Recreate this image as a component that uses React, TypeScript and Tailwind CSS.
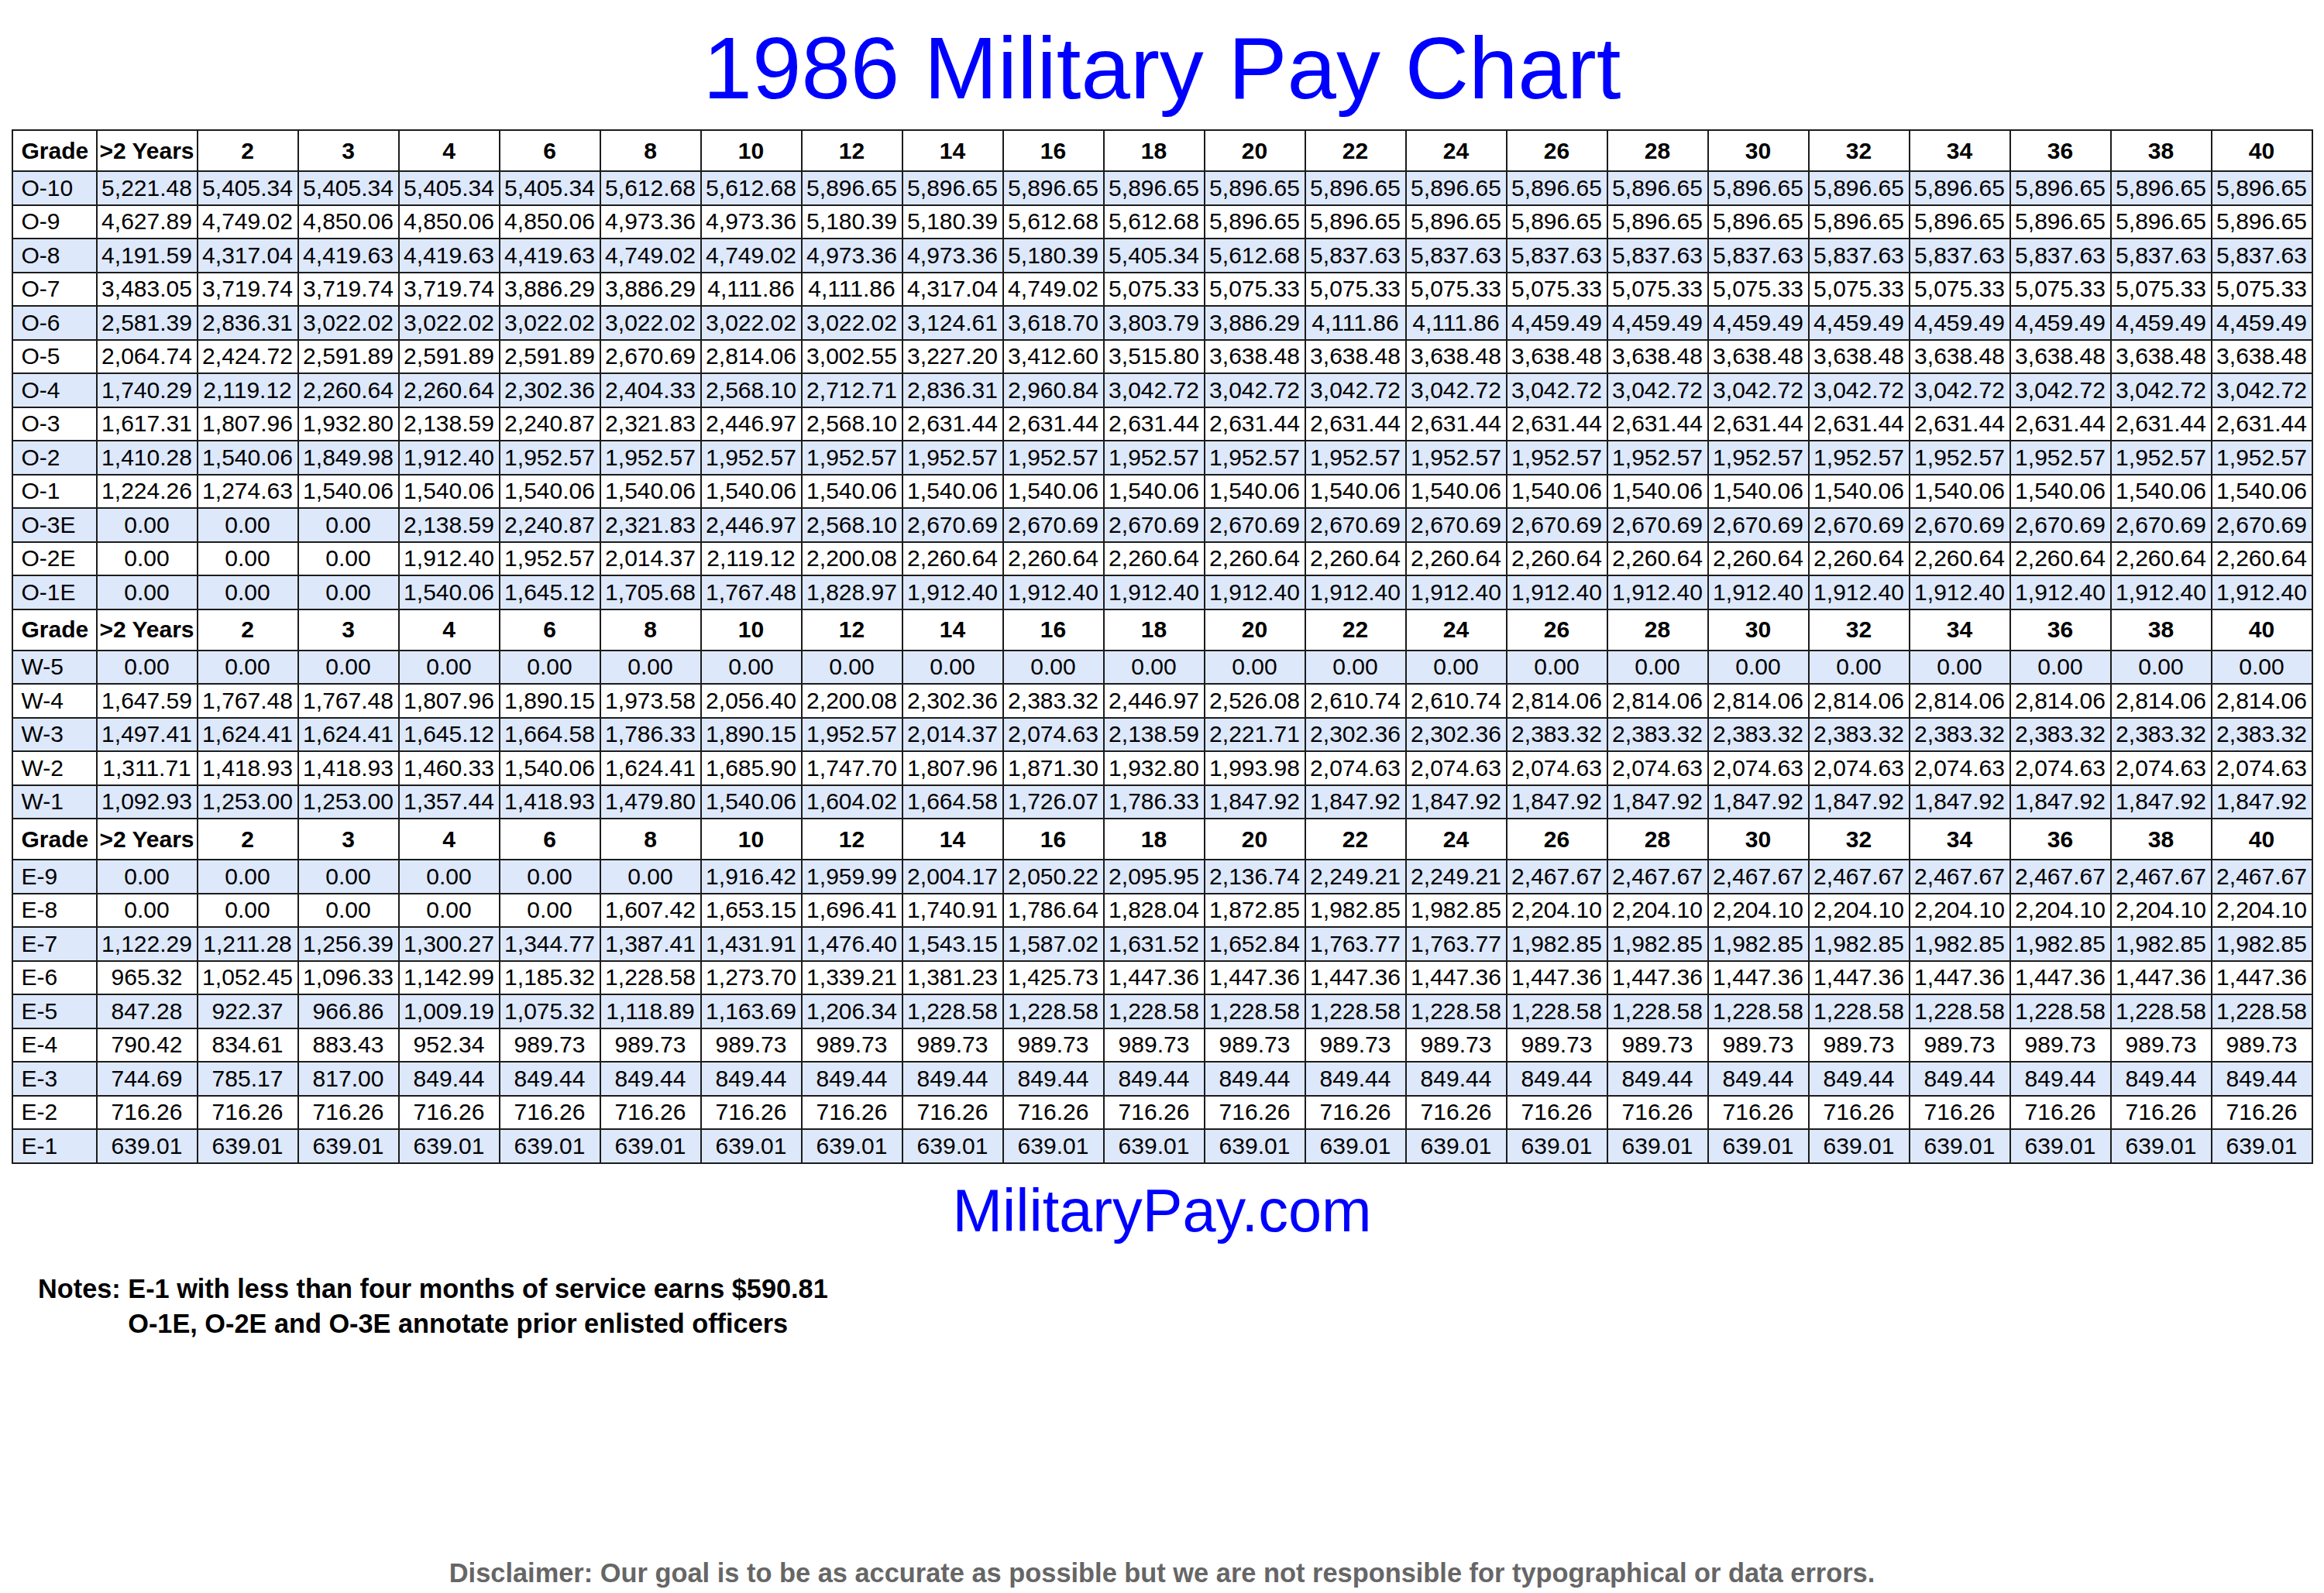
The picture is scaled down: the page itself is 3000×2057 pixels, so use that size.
import React from "react";

const YEARS = ["2", "3", "4", "6", "8", "10", "12", "14", "16", "18", "20", "22", "24", "26", "28", "30", "32", "34", "36", "38", "40"];

// pad a row out to 22 values by repeating the last one
const fill = (vals: string[]) => {
  const out = [...vals];
  while (out.length < 22) out.push(vals[vals.length - 1]);
  return out;
};

type Row = { grade: string; pay: string[] };

const officers: Row[] = [
  { grade: "O-10", pay: fill(["5,221.48", "5,405.34", "5,405.34", "5,405.34", "5,405.34", "5,612.68", "5,612.68", "5,896.65"]) },
  { grade: "O-9", pay: fill(["4,627.89", "4,749.02", "4,850.06", "4,850.06", "4,850.06", "4,973.36", "4,973.36", "5,180.39", "5,180.39", "5,612.68", "5,612.68", "5,896.65"]) },
  { grade: "O-8", pay: fill(["4,191.59", "4,317.04", "4,419.63", "4,419.63", "4,419.63", "4,749.02", "4,749.02", "4,973.36", "4,973.36", "5,180.39", "5,405.34", "5,612.68", "5,837.63"]) },
  { grade: "O-7", pay: fill(["3,483.05", "3,719.74", "3,719.74", "3,719.74", "3,886.29", "3,886.29", "4,111.86", "4,111.86", "4,317.04", "4,749.02", "5,075.33"]) },
  { grade: "O-6", pay: fill(["2,581.39", "2,836.31", "3,022.02", "3,022.02", "3,022.02", "3,022.02", "3,022.02", "3,022.02", "3,124.61", "3,618.70", "3,803.79", "3,886.29", "4,111.86", "4,111.86", "4,459.49"]) },
  { grade: "O-5", pay: fill(["2,064.74", "2,424.72", "2,591.89", "2,591.89", "2,591.89", "2,670.69", "2,814.06", "3,002.55", "3,227.20", "3,412.60", "3,515.80", "3,638.48"]) },
  { grade: "O-4", pay: fill(["1,740.29", "2,119.12", "2,260.64", "2,260.64", "2,302.36", "2,404.33", "2,568.10", "2,712.71", "2,836.31", "2,960.84", "3,042.72"]) },
  { grade: "O-3", pay: fill(["1,617.31", "1,807.96", "1,932.80", "2,138.59", "2,240.87", "2,321.83", "2,446.97", "2,568.10", "2,631.44"]) },
  { grade: "O-2", pay: fill(["1,410.28", "1,540.06", "1,849.98", "1,912.40", "1,952.57"]) },
  { grade: "O-1", pay: fill(["1,224.26", "1,274.63", "1,540.06"]) },
  { grade: "O-3E", pay: fill(["0.00", "0.00", "0.00", "2,138.59", "2,240.87", "2,321.83", "2,446.97", "2,568.10", "2,670.69"]) },
  { grade: "O-2E", pay: fill(["0.00", "0.00", "0.00", "1,912.40", "1,952.57", "2,014.37", "2,119.12", "2,200.08", "2,260.64"]) },
  { grade: "O-1E", pay: fill(["0.00", "0.00", "0.00", "1,540.06", "1,645.12", "1,705.68", "1,767.48", "1,828.97", "1,912.40"]) },
];

const warrant: Row[] = [
  { grade: "W-5", pay: fill(["0.00"]) },
  { grade: "W-4", pay: fill(["1,647.59", "1,767.48", "1,767.48", "1,807.96", "1,890.15", "1,973.58", "2,056.40", "2,200.08", "2,302.36", "2,383.32", "2,446.97", "2,526.08", "2,610.74", "2,610.74", "2,814.06"]) },
  { grade: "W-3", pay: fill(["1,497.41", "1,624.41", "1,624.41", "1,645.12", "1,664.58", "1,786.33", "1,890.15", "1,952.57", "2,014.37", "2,074.63", "2,138.59", "2,221.71", "2,302.36", "2,302.36", "2,383.32"]) },
  { grade: "W-2", pay: fill(["1,311.71", "1,418.93", "1,418.93", "1,460.33", "1,540.06", "1,624.41", "1,685.90", "1,747.70", "1,807.96", "1,871.30", "1,932.80", "1,993.98", "2,074.63"]) },
  { grade: "W-1", pay: fill(["1,092.93", "1,253.00", "1,253.00", "1,357.44", "1,418.93", "1,479.80", "1,540.06", "1,604.02", "1,664.58", "1,726.07", "1,786.33", "1,847.92"]) },
];

const enlisted: Row[] = [
  { grade: "E-9", pay: fill(["0.00", "0.00", "0.00", "0.00", "0.00", "0.00", "1,916.42", "1,959.99", "2,004.17", "2,050.22", "2,095.95", "2,136.74", "2,249.21", "2,249.21", "2,467.67"]) },
  { grade: "E-8", pay: fill(["0.00", "0.00", "0.00", "0.00", "0.00", "1,607.42", "1,653.15", "1,696.41", "1,740.91", "1,786.64", "1,828.04", "1,872.85", "1,982.85", "1,982.85", "2,204.10"]) },
  { grade: "E-7", pay: fill(["1,122.29", "1,211.28", "1,256.39", "1,300.27", "1,344.77", "1,387.41", "1,431.91", "1,476.40", "1,543.15", "1,587.02", "1,631.52", "1,652.84", "1,763.77", "1,763.77", "1,982.85"]) },
  { grade: "E-6", pay: fill(["965.32", "1,052.45", "1,096.33", "1,142.99", "1,185.32", "1,228.58", "1,273.70", "1,339.21", "1,381.23", "1,425.73", "1,447.36"]) },
  { grade: "E-5", pay: fill(["847.28", "922.37", "966.86", "1,009.19", "1,075.32", "1,118.89", "1,163.69", "1,206.34", "1,228.58"]) },
  { grade: "E-4", pay: fill(["790.42", "834.61", "883.43", "952.34", "989.73"]) },
  { grade: "E-3", pay: fill(["744.69", "785.17", "817.00", "849.44"]) },
  { grade: "E-2", pay: fill(["716.26"]) },
  { grade: "E-1", pay: fill(["639.01"]) },
];

const cell = "border-2 border-[#1c1c1c] p-0 leading-none";

const HeaderRow = () => (
  <tr className="h-[53px] bg-white font-bold">
    <td className={`${cell} pl-[11px] text-left`}>Grade</td>
    <td className={`${cell} text-center`}>&gt;2 Years</td>
    {YEARS.map((y) => (
      <td key={y} className={`${cell} text-center`}>
        {y}
      </td>
    ))}
  </tr>
);

const Section = ({ rows }: { rows: Row[] }) => (
  <>
    <HeaderRow />
    {rows.map((r, i) => (
      <tr key={r.grade} className={`h-[43.5px] ${i % 2 === 0 ? "bg-[#dde8fb]" : "bg-white"}`}>
        <td className={`${cell} pl-[11px] text-left`}>{r.grade}</td>
        {r.pay.map((p, j) => (
          <td key={j} className={`${cell} text-center`}>
            {p}
          </td>
        ))}
      </tr>
    ))}
  </>
);

export default function App() {
  return (
    <div
      className="flex h-[2057px] w-[3000px] flex-col bg-white text-black"
      style={{ fontFamily: '"Liberation Sans", Arial, sans-serif' }}
    >
      <h1 className="mt-[22px] text-center text-[114px] font-normal leading-[131px] text-[#0000ff]">
        1986 Military Pay Chart
      </h1>

      <table className="mx-auto mt-[14px] table-fixed border-collapse border-2 border-[#1c1c1c] text-[30px]">
        <colgroup>
          <col className="w-[109px]" />
          {Array.from({ length: 22 }).map((_, i) => (
            <col key={i} className="w-[130px]" />
          ))}
        </colgroup>
        <tbody>
          <Section rows={officers} />
          <Section rows={warrant} />
          <Section rows={enlisted} />
        </tbody>
      </table>

      <div className="mt-[16px] text-center text-[77.5px] leading-[88px] text-[#0000ff]">MilitaryPay.com</div>

      <div className="ml-[49px] mt-[35px] flex text-[34.3px] font-bold leading-[45px]">
        <span className="whitespace-pre">Notes: </span>
        <div className="flex flex-col">
          <span>E-1 with less than four months of service earns $590.81</span>
          <span>O-1E, O-2E and O-3E annotate prior enlisted officers</span>
        </div>
      </div>

      <div className="mt-auto pb-[6px] text-center text-[34.4px] font-bold leading-[39px] text-[#666666]">
        Disclaimer: Our goal is to be as accurate as possible but we are not responsible for typographical or data errors.
      </div>
    </div>
  );
}
